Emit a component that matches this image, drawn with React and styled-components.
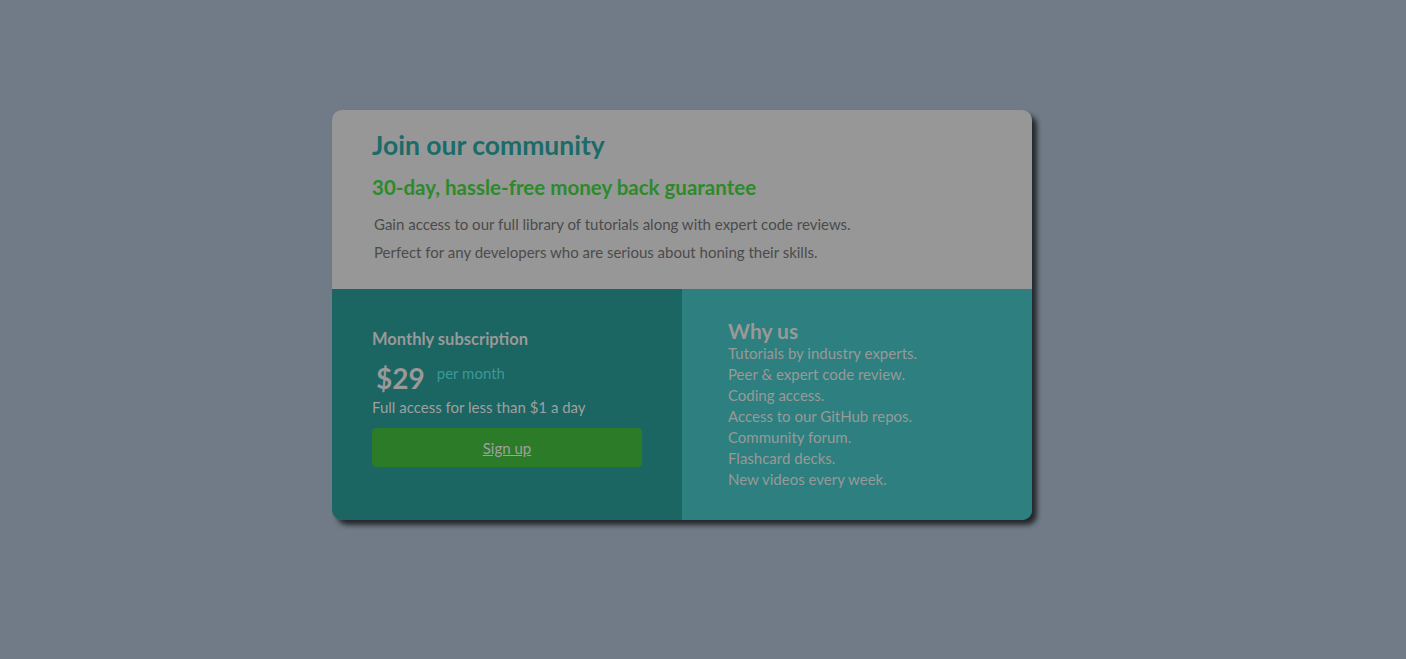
import React from "react";
import styled, { createGlobalStyle } from "styled-components";

const GlobalStyle = createGlobalStyle`
  html, body {
    margin: 0;
    padding: 0;
    background: #717b87;
    font-family: "Lato", "Open Sans", sans-serif;
  }
`;

const features = [
  "Tutorials by industry experts.",
  "Peer & expert code review.",
  "Coding access.",
  "Access to our GitHub repos.",
  "Community forum.",
  "Flashcard decks.",
  "New videos every week.",
];

const App = () => {
  return (
    <>
      <GlobalStyle />
      <Page>
        <Card>
          <Top>
            <Title>Join our community</Title>
            <Guarantee>30-day, hassle-free money back guarantee</Guarantee>
            <Text>
              Gain access to our full library of tutorials along with expert code reviews.
            </Text>
            <Text>
              Perfect for any developers who are serious about honing their skills.
            </Text>
          </Top>
          <Bottom>
            <Subscription>
              <SubTitle>Monthly subscription</SubTitle>
              <PriceRow>
                <Price>$29</Price>
                <Per>per month</Per>
              </PriceRow>
              <Access>Full access for less than $1 a day</Access>
              <SignUp href="#">Sign up</SignUp>
            </Subscription>
            <WhyUs>
              <WhyTitle>Why us</WhyTitle>
              <List>
                {features.map((f) => (
                  <Item key={f}>{f}</Item>
                ))}
              </List>
            </WhyUs>
          </Bottom>
        </Card>
      </Page>
    </>
  );
};

export default App;

const Page = styled.div`
  display: flex;
  justify-content: center;
  width: 100vw;
  height: 659px;
  padding: 110px 42px 0 0;
  box-sizing: border-box;
`;

const Card = styled.div`
  width: 700px;
  height: 410px;
  border-radius: 10px;
  overflow: hidden;
  display: flex;
  flex-direction: column;
  box-shadow: 5px 5px 5px #24292e;
`;

const Top = styled.div`
  height: 179px;
  box-sizing: border-box;
  background: #979797;
  padding: 20px 40px 0 40px;
`;

const Title = styled.h1`
  margin: 0;
  font-size: 26.5px;
  font-weight: 700;
  color: #1b6b69;
  line-height: 30px;
`;

const Guarantee = styled.h2`
  margin: 15px 0 11px;
  font-size: 20.5px;
  font-weight: 700;
  color: #2c8a2b;
  line-height: 24px;
`;

const Text = styled.p`
  margin: 0 0 0 2px;
  font-size: 15px;
  line-height: 28px;
  color: #4b4b4b;
`;

const Bottom = styled.div`
  flex: 1;
  display: flex;
`;

const Subscription = styled.div`
  width: 350px;
  box-sizing: border-box;
  padding: 39px 40px 0 40px;
  background: #1b6562;
`;

const SubTitle = styled.h3`
  margin: 0;
  font-size: 16.5px;
  font-weight: 700;
  line-height: 22px;
  color: #999999;
`;

const PriceRow = styled.div`
  display: flex;
  align-items: flex-start;
  margin-top: 10px;
  padding-left: 4px;
`;

const Price = styled.span`
  font-size: 28px;
  font-weight: 700;
  line-height: 36px;
  color: #999999;
`;

const Per = styled.span`
  margin: 3px 0 0 12px;
  font-size: 15px;
  line-height: 20px;
  color: #3a9a97;
`;

const Access = styled.p`
  margin: 0;
  font-size: 15px;
  line-height: 22px;
  color: #a0a0a0;
`;

const SignUp = styled.a`
  display: flex;
  justify-content: center;
  align-items: center;
  margin-top: 10px;
  height: 39px;
  border-radius: 4px;
  background: #2b7b29;
  color: #a0a0a0;
  font-size: 15px;
  text-decoration: underline;
`;

const WhyUs = styled.div`
  flex: 1;
  padding: 30px 46px 0 46px;
  background: #2d807f;
`;

const WhyTitle = styled.h3`
  margin: 0;
  font-size: 21px;
  font-weight: 700;
  line-height: 24px;
  color: #999999;
`;

const List = styled.ul`
  list-style: none;
  margin: 0;
  padding: 0;
`;

const Item = styled.li`
  font-size: 15px;
  line-height: 21px;
  color: #999999;
`;
